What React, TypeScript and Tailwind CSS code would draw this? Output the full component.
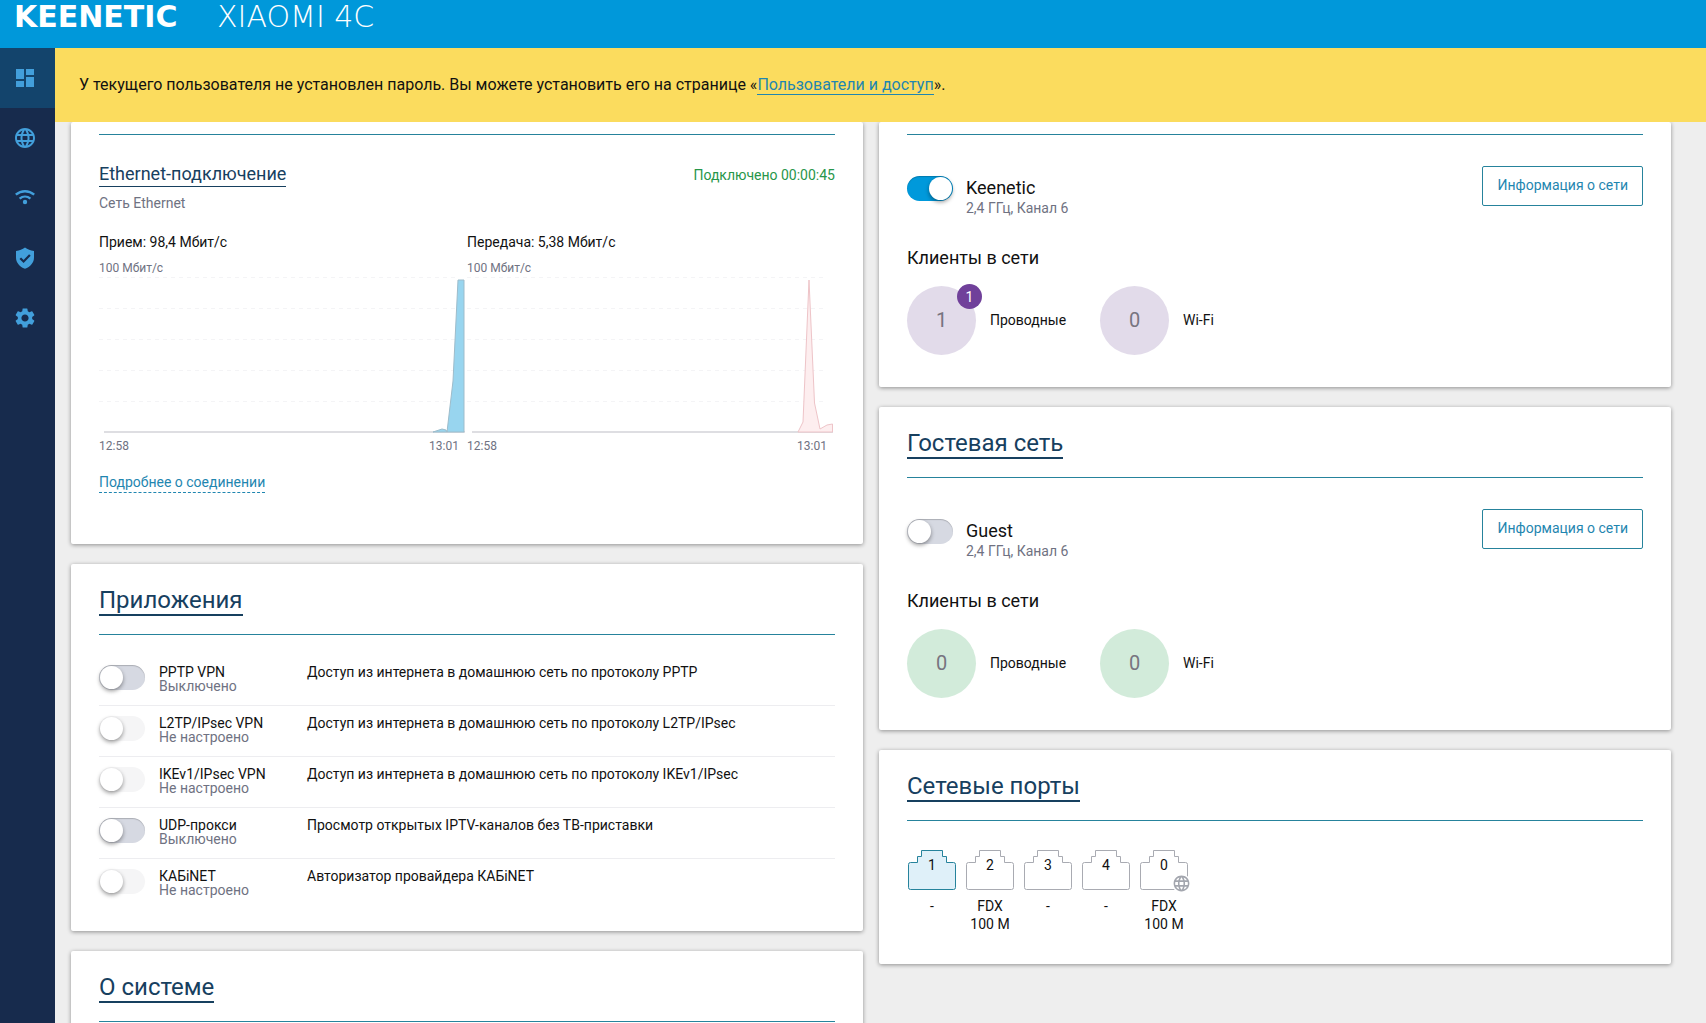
import { ReactNode, useId, useState } from 'react';
import clsx from 'clsx';
import { MdDashboard, MdLanguage, MdSettings } from 'react-icons/md';

interface AppRow {
  name: string;
  status: string;
  description: string;
  disabled?: boolean;
}

interface Port {
  id: string;
  lines: string[];
  active?: boolean;
  wan?: boolean;
}

const apps: AppRow[] = [
  { name: 'PPTP VPN', status: 'Выключено', description: 'Доступ из интернета в домашнюю сеть по протоколу PPTP' },
  { name: 'L2TP/IPsec VPN', status: 'Не настроено', description: 'Доступ из интернета в домашнюю сеть по протоколу L2TP/IPsec', disabled: true },
  { name: 'IKEv1/IPsec VPN', status: 'Не настроено', description: 'Доступ из интернета в домашнюю сеть по протоколу IKEv1/IPsec', disabled: true },
  { name: 'UDP-прокси', status: 'Выключено', description: 'Просмотр открытых IPTV-каналов без ТВ-приставки' },
  { name: 'КАБiNET', status: 'Не настроено', description: 'Авторизатор провайдера КАБiNET', disabled: true },
];

const ports: Port[] = [
  { id: '1', lines: ['-'], active: true },
  { id: '2', lines: ['FDX', '100 M'] },
  { id: '3', lines: ['-'] },
  { id: '4', lines: ['-'] },
  { id: '0', lines: ['FDX', '100 M'], wan: true },
];

function WifiIcon() {
  return (
    <svg viewBox="0 0 24 24" className="size-6" fill="none" stroke="currentColor" strokeWidth="2.4">
      <path d="M2.800 8.700c5.400-4.700 13-4.700 18.400 0" />
      <path d="M6.600 12.600c3.200-2.700 7.600-2.700 10.800 0" />
      <circle cx="12" cy="16" r="2.200" fill="currentColor" stroke="none" />
    </svg>
  );
}

function ShieldIcon() {
  return (
    <svg viewBox="0 0 24 24" className="size-6">
      <path d="M12 1.500c2.600 2 5.400 3.100 9 3.500v6.500c0 5.300-3.600 9.200-9 11.300-5.400-2.100-9-6-9-11.300V5c3.600-.4 6.400-1.500 9-3.500z" fill="currentColor" />
      <path d="M7.300 12.200l3.300 3.300 6.300-6.500" fill="none" stroke="#172b4d" strokeWidth="2.200" />
    </svg>
  );
}

const menu: { label: string; icon: ReactNode }[] = [
  { label: 'Системный монитор', icon: <MdDashboard size={24} /> },
  { label: 'Интернет', icon: <MdLanguage size={24} /> },
  { label: 'Мои сети и Wi-Fi', icon: <WifiIcon /> },
  { label: 'Сетевые правила', icon: <ShieldIcon /> },
  { label: 'Управление', icon: <MdSettings size={24} /> },
];

interface ToggleProps {
  id: string;
  defaultChecked?: boolean;
  disabled?: boolean;
}

function Toggle({ id, defaultChecked = false, disabled }: ToggleProps) {
  const [on, setOn] = useState(defaultChecked);
  return (
    <input
      id={id}
      type="checkbox"
      role="switch"
      checked={on}
      disabled={disabled}
      onChange={(e) => setOn(e.target.checked)}
      className="block h-[25px] w-[46px] shrink-0 cursor-pointer appearance-none rounded-full bg-[#d6d9e2] p-px shadow-[inset_0_1px_1px_rgba(0,0,0,0.2)] transition-colors before:block before:size-[23px] before:rounded-full before:bg-white before:shadow-[0_2px_4px_rgba(0,0,0,0.4)] before:transition-transform checked:bg-[#0099db] checked:before:translate-x-[21px] disabled:cursor-default disabled:bg-[#f5f5f6] disabled:shadow-none"
    />
  );
}

function Card({ title, className, children }: { title?: string; className?: string; children?: ReactNode }) {
  return (
    <section className={clsx('rounded-xs bg-white px-7 shadow-[0_1px_4px_rgba(0,0,0,0.4)]', className)}>
      {title ? (
        <h2 className="flex border-b border-[#26839c] pt-[22px] pb-[18px] text-2xl leading-7">
          <a href="#" className="border-b-2 border-[#17405f] text-[#17405f]">{title}</a>
        </h2>
      ) : (
        <div className="h-[13px] border-b border-[#26839c]" />
      )}
      {children}
    </section>
  );
}

interface ChartProps {
  title: string;
  area: string;
  fill: string;
  stroke: string;
}

function TrafficChart({ title, area, fill, stroke }: ChartProps) {
  return (
    <div className="min-w-0 flex-1">
      <div className="text-sm leading-5">{title}</div>
      <div className="mt-2 text-xs leading-4 text-[#6f7282]">100 Мбит/с</div>
      <svg viewBox="0 0 368 158" preserveAspectRatio="none" className="block h-[158px] w-full">
        {[1, 32, 63, 94, 125].map((y) => (
          <line key={y} x1="0" y1={y + 0.5} x2="358" y2={y + 0.5} stroke="#f4f4f6" strokeDasharray="4 4" />
        ))}
        <line x1="5" y1="156" x2="366" y2="156" stroke="#d3d3d8" strokeWidth="1.500" />
        <path d={area} fill={fill} stroke={stroke} />
      </svg>
      <div className="mt-1 flex justify-between pr-2 text-xs leading-4 text-[#6f7282]">
        <span>12:58</span>
        <span>13:01</span>
      </div>
    </div>
  );
}

function ClientCount({ count, label, color, badge }: { count: number; label: string; color: string; badge?: number }) {
  return (
    <div className="flex w-[193px] items-center gap-[14px]">
      <div className={clsx('relative flex size-[69px] items-center justify-center rounded-full pb-[2px] text-xl text-[#77747f]', color)}>
        {count}
        {badge !== undefined && (
          <span className="absolute -top-[2px] -right-[6px] flex size-[25px] items-center justify-center rounded-full bg-[#70409a] text-sm text-white">
            {badge}
          </span>
        )}
      </div>
      <span className="pb-[2px] text-sm">{label}</span>
    </div>
  );
}

interface NetworkProps {
  name: string;
  color: string;
  enabled?: boolean;
  wired: number;
  wireless: number;
  badge?: number;
}

function Network({ name, color, enabled, wired, wireless, badge }: NetworkProps) {
  const id = useId();
  return (
    <div className="pt-[31px] pb-8">
      <div className="flex items-start gap-[13px]">
        <div className="pt-[10px]">
          <Toggle id={id} defaultChecked={enabled} />
        </div>
        <div className="pt-[10px]">
          <label htmlFor={id} className="block text-lg leading-6">{name}</label>
          <div className="text-sm leading-4 text-[#6f7282]">2,4 ГГц, Канал 6</div>
        </div>
        <button className="ml-auto h-10 rounded-xs border border-[#26839c] px-[14px] pb-[2px] text-sm text-[#1f86b0]">
          Информация о сети
        </button>
      </div>
      <h3 className="mt-[30px] text-lg leading-6">Клиенты в сети</h3>
      <div className="mt-4 flex">
        <ClientCount count={wired} label="Проводные" color={color} badge={badge} />
        <ClientCount count={wireless} label="Wi-Fi" color={color} />
      </div>
    </div>
  );
}

function PortView({ port }: { port: Port }) {
  return (
    <li className="w-[50px] text-center text-sm leading-[18px]">
      <div className="relative flex h-10 justify-center pt-[6px]">
        <svg viewBox="0 0 50 40" className="absolute inset-0 h-10 w-[50px]">
          <path
            d="M14.500 .5h21v6h4v6h7q2 0 2 2v23q0 2-2 2h-43q-2 0-2-2v-23q0-2 2-2h7v-6h4z"
            fill={port.active ? '#dff0f9' : '#fff'}
            stroke={port.active ? '#26839c' : '#a9abb2'}
          />
        </svg>
        <span className="relative">{port.id}</span>
        {port.wan && (
          <MdLanguage size={19} className="absolute -right-[2px] -bottom-[3px] rounded-full bg-white text-[#a3a6ae]" />
        )}
      </div>
      <div className="mt-[7px]">
        {port.lines.map((l) => (
          <div key={l}>{l}</div>
        ))}
      </div>
    </li>
  );
}

export default function App() {
  return (
    <div className="flex h-screen flex-col overflow-hidden bg-[#eeeeee] font-['Roboto','Noto_Sans',sans-serif] text-[#111111]">
      <header className="flex h-12 shrink-0 bg-[#0098da] pl-[14px] font-['DejaVu_Sans',sans-serif] text-3xl leading-[34px] text-white">
        <span className="w-[203px] font-bold">KEENETIC</span>
        <span className="font-extralight">XIAOMI 4C</span>
      </header>

      <div className="flex min-h-0 flex-1">
        <nav className="w-[55px] shrink-0 bg-[#172b4d]">
          {menu.map((item, i) => (
            <a
              key={item.label}
              href="#"
              aria-label={item.label}
              className={clsx('flex h-[60px] items-center pl-[13px] text-[#429fdb]', i === 0 && 'bg-[#13446c]')}
            >
              {item.icon}
            </a>
          ))}
        </nav>

        <div className="flex min-w-0 flex-1 flex-col">
          <div className="flex h-[74px] shrink-0 items-center bg-[#fbdc5e] px-6 text-base">
            <p>
              У текущего пользователя не установлен пароль. Вы можете установить его на странице «
              <a href="#" className="border-b border-[#1f86b0] text-[#1f86b0]">Пользователи и доступ</a>».
            </p>
          </div>

          <main className="grid min-h-0 flex-1 grid-cols-2 items-start gap-4 overflow-hidden pr-[35px] pl-4">
            <div className="flex flex-col gap-5">
              <Card>
                <div className="flex items-start justify-between pt-[27px]">
                  <a href="#" className="border-b border-[#17405f] text-lg leading-6 text-[#17405f]">Ethernet-подключение</a>
                  <span className="pt-[3px] text-sm leading-5 text-[#27964a]">Подключено 00:00:45</span>
                </div>
                <div className="mt-[6px] text-sm leading-5 text-[#6f7282]">Сеть Ethernet</div>
                <div className="mt-[19px] flex">
                  <TrafficChart
                    title="Прием: 98,4 Мбит/с"
                    area="M334 156l6-2 3-1 4 1 1 2 6-51 5-101h6v152z"
                    fill="#98d5ef"
                    stroke="#9dbccb"
                  />
                  <TrafficChart
                    title="Передача: 5,38 Мбит/с"
                    area="M331 156l5-10 6-142 5.500 123 5.500 26 7-4 5.500-1v8z"
                    fill="#fdeeef"
                    stroke="#eec4c8"
                  />
                </div>
                <div className="pt-[18px] pb-[51px] text-sm leading-5">
                  <button className="border-b border-dashed border-[#1f86b0] text-[#1f86b0]">Подробнее о соединении</button>
                </div>
              </Card>

              <Card title="Приложения">
                <ul className="pt-5 pb-[21px]">
                  {apps.map((app, i) => (
                    <li key={app.name} className="flex h-[51px] items-start border-b border-[#ededf0] pt-[10px] text-sm leading-[14px] last:border-transparent">
                      <Toggle id={`app-${i}`} disabled={app.disabled} />
                      <label htmlFor={`app-${i}`} className="ml-[14px] w-[148px]">
                        <span className="block">{app.name}</span>
                        <span className="block text-[#6f7282]">{app.status}</span>
                      </label>
                      <p>{app.description}</p>
                    </li>
                  ))}
                </ul>
              </Card>

              <Card title="О системе" className="pb-10" />
            </div>

            <div className="flex flex-col gap-5">
              <Card>
                <Network name="Keenetic" color="bg-[#e2dbea]" enabled wired={1} wireless={0} badge={1} />
              </Card>

              <Card title="Гостевая сеть">
                <Network name="Guest" color="bg-[#d2ebda]" wired={0} wireless={0} />
              </Card>

              <Card title="Сетевые порты">
                <ul className="flex gap-2 pt-[29px] pb-[31px]">
                  {ports.map((port) => (
                    <PortView key={port.id} port={port} />
                  ))}
                </ul>
              </Card>
            </div>
          </main>
        </div>
      </div>
    </div>
  );
}
